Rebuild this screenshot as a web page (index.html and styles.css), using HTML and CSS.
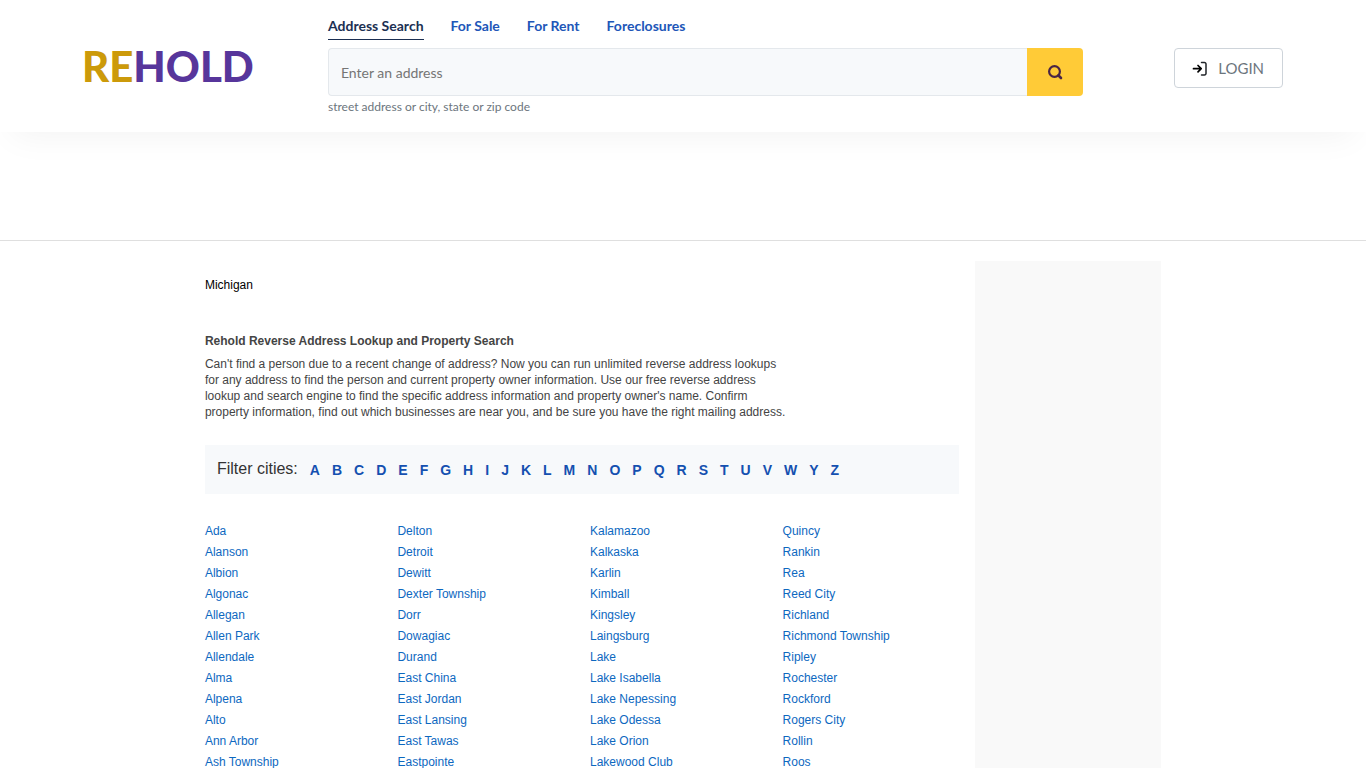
FILE: index.html
```html
<!DOCTYPE html>
<html lang="en">
<head>
  <meta charset="UTF-8">
  <meta name="viewport" content="width=device-width, initial-scale=1.0">
  <title>Michigan Reverse Address Lookup | Rehold</title>
  <link rel="stylesheet" href="styles.css">
</head>
<body>
  <header class="header">
    <div class="header-inner">
      <a href="#" class="logo"><span class="logo-re">RE</span><span class="logo-hold">HOLD</span></a>

      <div class="search">
        <nav class="search-tabs">
          <a href="#" class="active">Address Search</a>
          <a href="#">For Sale</a>
          <a href="#">For Rent</a>
          <a href="#">Foreclosures</a>
        </nav>
        <form class="search-form">
          <input type="text" id="address" placeholder="Enter an address" aria-label="Address">
          <button type="submit" aria-label="Search">
            <svg width="16" height="16" viewBox="0 0 16 16" fill="none" stroke="#4a2545" stroke-linecap="round">
              <circle cx="7.500" cy="7.500" r="5.400" stroke-width="2.2"/>
              <path d="M11.500 11.500l2.500 2.500" stroke-width="2.6"/>
            </svg>
          </button>
        </form>
        <label class="search-hint" for="address">street address or city, state or zip code</label>
      </div>

      <button type="button" class="login">
        <svg width="16" height="16" viewBox="0 0 16 16" fill="none" stroke="#212529" stroke-width="1.5" stroke-linecap="round" stroke-linejoin="round">
          <path d="M9.500 2.500h3a1.500 1.500 0 0 1 1.500 1.500v9.500a1.500 1.500 0 0 1-1.500 1.500h-3"/>
          <path d="M1.500 8.700h7.500M6 5.500l3.200 3.200-3.200 3.200" stroke="#000" stroke-width="1.700"/>
        </svg>
        <span>LOGIN</span>
      </button>
    </div>
  </header>

  <div class="banner"></div>

  <div class="container">
    <main>
      <div class="breadcrumb">Michigan</div>

      <section class="intro">
        <h1>Rehold Reverse Address Lookup and Property Search</h1>
        <p>Can't find a person due to a recent change of address? Now you can run unlimited reverse address lookups for any address to find the person and current property owner information. Use our free reverse address lookup and search engine to find the specific address information and property owner's name. Confirm property information, find out which businesses are near you, and be sure you have the right mailing address.</p>
      </section>

      <div class="filter">
        <span class="filter-title">Filter cities:</span>
        <a href="#">A</a>
        <a href="#">B</a>
        <a href="#">C</a>
        <a href="#">D</a>
        <a href="#">E</a>
        <a href="#">F</a>
        <a href="#">G</a>
        <a href="#">H</a>
        <a href="#">I</a>
        <a href="#">J</a>
        <a href="#">K</a>
        <a href="#">L</a>
        <a href="#">M</a>
        <a href="#">N</a>
        <a href="#">O</a>
        <a href="#">P</a>
        <a href="#">Q</a>
        <a href="#">R</a>
        <a href="#">S</a>
        <a href="#">T</a>
        <a href="#">U</a>
        <a href="#">V</a>
        <a href="#">W</a>
        <a href="#">Y</a>
        <a href="#">Z</a>
      </div>

      <div class="cities">
        <ul>
          <li><a href="#">Ada</a></li>
          <li><a href="#">Alanson</a></li>
          <li><a href="#">Albion</a></li>
          <li><a href="#">Algonac</a></li>
          <li><a href="#">Allegan</a></li>
          <li><a href="#">Allen Park</a></li>
          <li><a href="#">Allendale</a></li>
          <li><a href="#">Alma</a></li>
          <li><a href="#">Alpena</a></li>
          <li><a href="#">Alto</a></li>
          <li><a href="#">Ann Arbor</a></li>
          <li><a href="#">Ash Township</a></li>
        </ul>
        <ul>
          <li><a href="#">Delton</a></li>
          <li><a href="#">Detroit</a></li>
          <li><a href="#">Dewitt</a></li>
          <li><a href="#">Dexter Township</a></li>
          <li><a href="#">Dorr</a></li>
          <li><a href="#">Dowagiac</a></li>
          <li><a href="#">Durand</a></li>
          <li><a href="#">East China</a></li>
          <li><a href="#">East Jordan</a></li>
          <li><a href="#">East Lansing</a></li>
          <li><a href="#">East Tawas</a></li>
          <li><a href="#">Eastpointe</a></li>
        </ul>
        <ul>
          <li><a href="#">Kalamazoo</a></li>
          <li><a href="#">Kalkaska</a></li>
          <li><a href="#">Karlin</a></li>
          <li><a href="#">Kimball</a></li>
          <li><a href="#">Kingsley</a></li>
          <li><a href="#">Laingsburg</a></li>
          <li><a href="#">Lake</a></li>
          <li><a href="#">Lake Isabella</a></li>
          <li><a href="#">Lake Nepessing</a></li>
          <li><a href="#">Lake Odessa</a></li>
          <li><a href="#">Lake Orion</a></li>
          <li><a href="#">Lakewood Club</a></li>
        </ul>
        <ul>
          <li><a href="#">Quincy</a></li>
          <li><a href="#">Rankin</a></li>
          <li><a href="#">Rea</a></li>
          <li><a href="#">Reed City</a></li>
          <li><a href="#">Richland</a></li>
          <li><a href="#">Richmond Township</a></li>
          <li><a href="#">Ripley</a></li>
          <li><a href="#">Rochester</a></li>
          <li><a href="#">Rockford</a></li>
          <li><a href="#">Rogers City</a></li>
          <li><a href="#">Rollin</a></li>
          <li><a href="#">Roos</a></li>
        </ul>
      </div>
    </main>

    <aside class="sidebar"></aside>
  </div>
</body>
</html>
```
FILE: styles.css
```css
* {
  box-sizing: border-box;
}

body {
  margin: 0;
  font-family: "Liberation Sans", Arial, sans-serif;
  font-size: 12px;
  line-height: 16px;
  color: #444;
  background-color: #fff;
}

a {
  text-decoration: none;
}

.header {
  padding: 16px 6% 16px;
  font-family: Lato, sans-serif;
  box-shadow: 0 16px 32px -12px rgba(0, 0, 0, 0.05);
}

.header-inner {
  display: flex;
  align-items: flex-start;
}

/* Logo */
.logo {
  width: 246px;
  padding-top: 26px;
  font-size: 42px;
  font-weight: 900;
  line-height: 48px;
}

.logo-re {
  color: #cc9a0a;
}

.logo-hold {
  color: #57359b;
}

/* Address search */
.search {
  flex: 1;
}

.search-tabs {
  display: flex;
  gap: 27px;
  margin-bottom: 8px;
  font-size: 14px;
  font-weight: 700;
  line-height: 20px;
}

.search-tabs a {
  padding-bottom: 3px;
  color: #2156b8;
  border-bottom: 1px solid transparent;
}

.search-tabs a.active {
  color: #1b2f52;
  border-bottom-color: #1b2f52;
}

.search-form {
  display: flex;
  height: 48px;
}

.search-form input {
  flex: 1;
  min-width: 0;
  padding: 0 12px;
  border: 1px solid #e4e8ec;
  border-right: 0;
  border-radius: 4px 0 0 4px;
  background-color: #f7f9fb;
  font-family: Lato, sans-serif;
  font-size: 14px;
  color: #333;
}

.search-form input::placeholder {
  color: #757575;
}

.search-form button {
  display: flex;
  align-items: center;
  justify-content: center;
  width: 56px;
  padding: 0;
  border: none;
  border-radius: 0 4px 4px 0;
  background-color: #ffcb37;
  cursor: pointer;
}

.search-hint {
  display: block;
  padding-top: 2px;
  font-size: 12px;
  line-height: 18px;
  color: #6c757d;
}

.login {
  display: flex;
  align-items: center;
  justify-content: center;
  gap: 10px;
  height: 40px;
  margin: 32px 1px 0 91px;
  padding: 0 18px 0 17px;
  border: 1px solid #ced4da;
  border-radius: 4px;
  background-color: #fff;
  font-family: Lato, sans-serif;
  font-size: 15px;
  color: #6c757d;
  cursor: pointer;
}

.banner {
  height: 109px;
  border-bottom: 1px solid #dfdfdf;
}

/* Page content */
.container {
  display: grid;
  grid-template-columns: 1fr 186px;
  gap: 16px;
  width: 70%;
  margin: 20px auto 0;
}

.breadcrumb {
  padding-top: 16px;
  color: #000;
}

.intro {
  max-width: 584px;
  margin-top: 40px;
}

.intro h1 {
  margin: 0 0 7px;
  font-size: 12px;
  line-height: 16px;
}

.intro p {
  margin: 0;
}

.filter {
  display: flex;
  flex-wrap: wrap;
  align-items: flex-start;
  gap: 12px;
  margin-top: 25px;
  padding: 12px;
  background-color: #f7f9fb;
  line-height: 24px;
}

.filter-title {
  font-size: 16px;
  color: #333;
}

.filter a {
  padding-top: 1px;
  font-size: 14px;
  font-weight: 700;
  color: #1450b0;
}

.cities {
  display: grid;
  grid-template-columns: repeat(4, 1fr);
  gap: 16px;
  margin-top: 27px;
}

.cities ul {
  margin: 0;
  padding: 0;
  list-style: none;
}

.cities li {
  line-height: 21px;
}

.cities a {
  color: #0d68bf;
}

.sidebar {
  background-color: #f9f9f9;
}
```
